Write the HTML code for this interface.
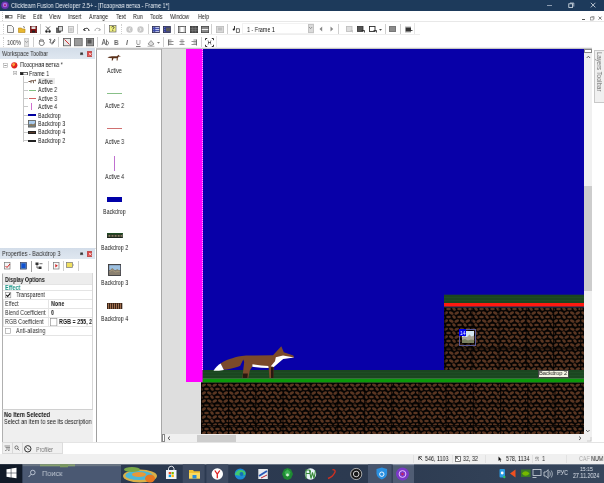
<!DOCTYPE html>
<html><head><meta charset="utf-8">
<style>
*{margin:0;padding:0;box-sizing:border-box}
html,body{width:604px;height:483px;overflow:hidden;background:#fff;font-family:"Liberation Sans",sans-serif;font-size:7px;color:#000;position:relative}
.a{position:absolute}
.t{position:absolute;white-space:nowrap;line-height:1;transform-origin:0 50%;will-change:transform}
</style></head><body>
<div class="a" style="left:0px;top:0px;width:604px;height:10.6px;background:#1d3a5b;"></div>
<svg class="a" style="left:1px;top:1.2px" width="9" height="9" viewBox="0 0 9 9"><circle cx="4" cy="4.2" r="3.8" fill="#6a32b0"/><circle cx="4" cy="4" r="2.2" fill="#b070e0"/><circle cx="4" cy="4.3" r="1" fill="#a02070"/></svg>
<div class="t" style="left:10.7px;top:2.00px;font-size:7px;color:#e6ecf3;transform:scaleX(0.795);">Clickteam Fusion Developer 2.5+ - [Позорная ветка - Frame 1*]</div>
<div class="a" style="left:547px;top:4.6px;width:5px;height:0.7px;background:#8c9cb0;"></div>
<svg class="a" style="left:567.5px;top:2.3px" width="7" height="6" viewBox="0 0 7 6"><rect x=".8" y="1.8" width="3.8" height="3.6" fill="none" stroke="#dde4ec" stroke-width=".8"/><path d="M2 1h3.8v3.6" fill="none" stroke="#dde4ec" stroke-width=".7"/></svg>
<svg class="a" style="left:589.5px;top:2.3px" width="7" height="6" viewBox="0 0 7 6"><path d="M.8 .8l4.6 4.6M5.4 .8L.8 5.4" stroke="#dde4ec" stroke-width=".8"/></svg>
<div class="a" style="left:0px;top:10.6px;width:604px;height:10.6px;background:#fff;"></div>
<svg class="a" style="left:5px;top:14.8px" width="8" height="4" viewBox="0 0 8 4"><rect x="0.4" y="0.4" width="6.6" height="2.6" fill="#fff" stroke="#555" stroke-width=".8"/><rect x="0.4" y="0.4" width="3.5" height="2.6" fill="#555"/></svg>
<div class="a" style="left:2.4px;top:12px;width:1px;height:9px;background:transparent;border-left:1px dotted #cfcfcf"></div>
<div class="t" style="left:16.9px;top:12.60px;font-size:7px;color:#1a1a1a;transform:scaleX(0.77);">File</div>
<div class="t" style="left:32.8px;top:12.60px;font-size:7px;color:#1a1a1a;transform:scaleX(0.77);">Edit</div>
<div class="t" style="left:49.2px;top:12.60px;font-size:7px;color:#1a1a1a;transform:scaleX(0.77);">View</div>
<div class="t" style="left:67.9px;top:12.60px;font-size:7px;color:#1a1a1a;transform:scaleX(0.77);">Insert</div>
<div class="t" style="left:88.7px;top:12.60px;font-size:7px;color:#1a1a1a;transform:scaleX(0.77);">Arrange</div>
<div class="t" style="left:116.0px;top:12.60px;font-size:7px;color:#1a1a1a;transform:scaleX(0.77);">Text</div>
<div class="t" style="left:133.0px;top:12.60px;font-size:7px;color:#1a1a1a;transform:scaleX(0.77);">Run</div>
<div class="t" style="left:150.0px;top:12.60px;font-size:7px;color:#1a1a1a;transform:scaleX(0.77);">Tools</div>
<div class="t" style="left:170.0px;top:12.60px;font-size:7px;color:#1a1a1a;transform:scaleX(0.77);">Window</div>
<div class="t" style="left:198.0px;top:12.60px;font-size:7px;color:#1a1a1a;transform:scaleX(0.77);">Help</div>
<div class="a" style="left:582px;top:19px;width:3px;height:0.9px;background:#555;"></div>
<svg class="a" style="left:589.5px;top:16px" width="5" height="5" viewBox="0 0 5 5"><rect x=".4" y="1.2" width="2.8" height="2.8" fill="none" stroke="#777" stroke-width=".6"/><path d="M1.3 .5h2.8v2.8" fill="none" stroke="#777" stroke-width=".6"/></svg>
<svg class="a" style="left:597.5px;top:16.3px" width="5" height="5" viewBox="0 0 5 5"><path d="M.6 .6l3 3M3.6 .6l-3 3" stroke="#555" stroke-width=".8"/></svg>
<div class="a" style="left:0px;top:21.2px;width:604px;height:0.8px;background:#e8e8e8;"></div>
<div class="a" style="left:0px;top:22px;width:604px;height:13px;background:#fff;"></div>
<div class="a" style="left:2.5px;top:23.5px;width:1px;height:10.0px;background:transparent;border-left:1px dotted #cfcfcf"></div>
<svg class="a" style="left:7px;top:25px" width="7" height="8" viewBox="0 0 7 8"><path d="M.5 .5h4l2 2v5h-6z" fill="#f4f4f4" stroke="#777" stroke-width=".9"/></svg>
<svg class="a" style="left:18px;top:25.5px" width="8" height="7" viewBox="0 0 8 7"><path d="M.5 2h3l1 1h2.5v3.5h-6.5z" fill="#e8b830" stroke="#b08010" stroke-width=".6"/><path d="M5 .5l2 1" stroke="#555" stroke-width=".8"/></svg>
<svg class="a" style="left:30px;top:25.5px" width="7" height="7" viewBox="0 0 7 7"><rect x=".3" y=".3" width="6.4" height="6.4" fill="#8a1010" stroke="#4a0808" stroke-width=".6"/><rect x="1.5" y=".5" width="4" height="2.5" fill="#e0e0e0"/><rect x="2" y="4.5" width="3" height="2" fill="#222"/></svg>
<div class="a" style="left:40px;top:23.5px;width:0.8px;height:10.0px;background:#cfcfcf;"></div>
<svg class="a" style="left:45px;top:25.5px" width="6" height="7" viewBox="0 0 6 7"><path d="M1 .5l4 4M5 .5l-4 4" stroke="#444" stroke-width=".9"/><circle cx="1.5" cy="5.5" r="1.2" fill="#222"/><circle cx="4.5" cy="5.5" r="1.2" fill="#222"/></svg>
<svg class="a" style="left:56px;top:25.5px" width="7" height="7" viewBox="0 0 7 7"><rect x=".5" y="2" width="4" height="4.5" fill="#666" stroke="#333" stroke-width=".6"/><rect x="2.5" y=".5" width="4" height="4.5" fill="#ddd" stroke="#333" stroke-width=".7"/></svg>
<svg class="a" style="left:68px;top:25.5px" width="6" height="7" viewBox="0 0 6 7"><rect x=".5" y=".5" width="5" height="6" fill="#e6e6e6" stroke="#aaa" stroke-width=".7"/><rect x="1.5" y="2" width="3" height="3.5" fill="#ccc"/></svg>
<div class="a" style="left:77.4px;top:23.5px;width:0.8px;height:10.0px;background:#cfcfcf;"></div>
<svg class="a" style="left:82.5px;top:26.5px" width="7" height="5" viewBox="0 0 7 5"><path d="M1.5 1.5l-1 1.5 2 .5" fill="none" stroke="#222" stroke-width="1"/><path d="M1 2.5c2-2 5-1.5 5 1.5" fill="none" stroke="#222" stroke-width="1"/></svg>
<svg class="a" style="left:94px;top:26.5px" width="7" height="5" viewBox="0 0 7 5"><path d="M5.5 1.5l1 1.5-2 .5" fill="none" stroke="#aaa" stroke-width="1"/><path d="M6 2.5c-2-2-5-1.5-5 1.5" fill="none" stroke="#aaa" stroke-width="1"/></svg>
<div class="a" style="left:104px;top:23.5px;width:0.8px;height:10.0px;background:#cfcfcf;"></div>
<svg class="a" style="left:108.5px;top:25px" width="8" height="8" viewBox="0 0 8 8"><rect x=".5" y=".5" width="6.5" height="6.5" fill="#f0f080" stroke="#666" stroke-width=".7"/><path d="M2.5 2.2c.5-1 2.5-1 2.5.3 0 .8-1.2 1-1.2 1.8" fill="none" stroke="#222" stroke-width=".8"/><circle cx="3.8" cy="5.3" r=".5" fill="#222"/></svg>
<div class="a" style="left:121px;top:23.5px;width:1px;height:10.0px;background:transparent;border-left:1px dotted #cfcfcf"></div>
<svg class="a" style="left:126px;top:25.5px" width="7" height="7" viewBox="0 0 7 7"><circle cx="3.5" cy="3.5" r="3.2" fill="#c8c8c8"/><path d="M4.5 2l-1.7 1.5 1.7 1.5" fill="none" stroke="#fff" stroke-width=".9"/></svg>
<svg class="a" style="left:137px;top:25.5px" width="7" height="7" viewBox="0 0 7 7"><circle cx="3.5" cy="3.5" r="3.2" fill="#c8c8c8"/><path d="M2.5 2l1.7 1.5-1.7 1.5" fill="none" stroke="#fff" stroke-width=".9"/></svg>
<div class="a" style="left:147.5px;top:23.5px;width:0.8px;height:10.0px;background:#cfcfcf;"></div>
<svg class="a" style="left:152px;top:25.5px" width="8" height="7" viewBox="0 0 8 7"><rect x=".3" y=".3" width="7.2" height="6.4" fill="#3a48a8" stroke="#223" stroke-width=".6"/><path d="M3.3 1.6h3.9M3.3 3.5h3.9M3.3 5.4h3.9" stroke="#e8ecff" stroke-width=".8"/><path d="M1.6 1.6h.5M1.6 3.5h.5M1.6 5.4h.5" stroke="#fff" stroke-width=".8"/></svg>
<svg class="a" style="left:162.8px;top:25.5px" width="8" height="7" viewBox="0 0 8 7"><rect x=".3" y=".3" width="7.2" height="6.4" fill="#303a98" stroke="#223" stroke-width=".6"/><rect x="3" y="1.5" width="4" height="4" fill="#5a5a5a"/><path d="M1.6 1.6h.5M1.6 3.5h.5M1.6 5.4h.5" stroke="#dde" stroke-width=".8"/></svg>
<div class="a" style="left:174px;top:23.5px;width:0.8px;height:10.0px;background:#cfcfcf;"></div>
<svg class="a" style="left:178.2px;top:25.5px" width="8" height="7" viewBox="0 0 8 7"><rect x=".4" y=".4" width="7.2" height="6.2" fill="#fff" stroke="#444" stroke-width=".8"/><rect x=".8" y=".8" width="1.6" height="5.4" fill="#aaa"/><rect x="5.6" y=".8" width="1.6" height="5.4" fill="#ccc"/></svg>
<svg class="a" style="left:189.6px;top:25.5px" width="8" height="7" viewBox="0 0 8 7"><rect x=".4" y=".4" width="7.2" height="6.2" fill="#505050" stroke="#333" stroke-width=".8"/><path d="M2.7 .5v6M5.3 .5v6M.5 2.6h7M.5 4.4h7" stroke="#888" stroke-width=".5"/></svg>
<svg class="a" style="left:201.2px;top:25.5px" width="8" height="7" viewBox="0 0 8 7"><rect x=".4" y=".4" width="7.2" height="6.2" fill="#8a8a8a" stroke="#444" stroke-width=".8"/><path d="M.8 3.5h6.4" stroke="#f0f0f0" stroke-width="1"/></svg>
<div class="a" style="left:211.3px;top:23.5px;width:0.8px;height:10.0px;background:#cfcfcf;"></div>
<svg class="a" style="left:216px;top:25.5px" width="8" height="7" viewBox="0 0 8 7"><rect x=".4" y=".4" width="7.2" height="6.2" fill="#d8d8d8" stroke="#bbb" stroke-width=".8"/><rect x="2" y="1.5" width="4" height="3" fill="#c0c0c0"/></svg>
<div class="a" style="left:227px;top:23.5px;width:0.8px;height:10.0px;background:#cfcfcf;"></div>
<svg class="a" style="left:231.5px;top:25px" width="8" height="8" viewBox="0 0 8 8"><path d="M2.5 1v3.5" stroke="#222" stroke-width=".9"/><circle cx="1.7" cy="4.5" r="1" fill="#222"/><rect x="4.3" y="3.8" width="3" height="3.5" fill="#fff" stroke="#333" stroke-width=".7"/></svg>
<div class="a" style="left:241.5px;top:23.5px;width:0.8px;height:10.0px;background:#cfcfcf;"></div>
<div class="a" style="left:241.8px;top:23px;width:72px;height:11px;background:#fff;border:0.6px solid #f2f2f2"></div>
<div class="t" style="left:247px;top:25.50px;font-size:7px;color:#111;transform:scaleX(0.77);">1 - Frame 1</div>
<div class="a" style="left:307.5px;top:24.3px;width:6.2px;height:9px;background:#dadada;border:0.6px solid #c4c4c4"></div>
<svg class="a" style="left:308px;top:26px" width="5" height="4" viewBox="0 0 5 4"><path d="M1 1l1.6 1.6L4.2 1" fill="none" stroke="#777" stroke-width=".7"/></svg>
<svg class="a" style="left:318.8px;top:26px" width="4" height="6" viewBox="0 0 4 6"><path d="M3.2 .5v5L.5 3z" fill="#888"/></svg>
<svg class="a" style="left:329.8px;top:26px" width="4" height="6" viewBox="0 0 4 6"><path d="M.5 .5v5L3.2 3z" fill="#888"/></svg>
<div class="a" style="left:338.3px;top:23.5px;width:0.8px;height:10.0px;background:#cfcfcf;"></div>
<svg class="a" style="left:345.5px;top:25.8px" width="7" height="7" viewBox="0 0 7 7"><rect x=".4" y=".4" width="5.6" height="5" fill="#ddd" stroke="#bbb" stroke-width=".8"/><path d="M4.5 4.5h2v2" fill="none" stroke="#bbb" stroke-width=".7"/></svg>
<svg class="a" style="left:356.8px;top:25.8px" width="8" height="7" viewBox="0 0 8 7"><rect x=".4" y=".4" width="5.6" height="5" fill="#555" stroke="#333" stroke-width=".8"/><path d="M4.5 4.5h3v2" fill="none" stroke="#222" stroke-width=".8"/></svg>
<svg class="a" style="left:368.8px;top:25.8px" width="8" height="7" viewBox="0 0 8 7"><rect x=".4" y=".4" width="5.6" height="5" fill="#fff" stroke="#222" stroke-width=".9"/><path d="M4.5 4.5h3v2" fill="none" stroke="#222" stroke-width=".8"/></svg>
<svg class="a" style="left:378.8px;top:28.5px" width="3" height="2" viewBox="0 0 3 2"><path d="M0 0h3L1.5 1.8z" fill="#444"/></svg>
<div class="a" style="left:384.7px;top:23.5px;width:0.8px;height:10.0px;background:#cfcfcf;"></div>
<div class="a" style="left:389.3px;top:26.3px;width:6.8px;height:5.5px;background:#8c8c8c;border:0.6px solid #777"></div>
<div class="a" style="left:400px;top:23.5px;width:0.8px;height:10.0px;background:#cfcfcf;"></div>
<svg class="a" style="left:404.5px;top:25.5px" width="8" height="7" viewBox="0 0 8 7"><rect x=".5" y="1.5" width="5.5" height="4" fill="#333"/><path d="M1 .5v1M3 .5v1M5 .5v1M1 5.5v1M3 5.5v1M5 5.5v1" stroke="#333" stroke-width=".8"/><path d="M6 4.5h1.5" stroke="#333" stroke-width=".9"/></svg>
<div class="a" style="left:414.3px;top:22.5px;width:0.8px;height:12px;background:#e6e6e6;"></div>
<div class="a" style="left:0px;top:34.4px;width:420px;height:0.7px;background:#eeeeee;"></div>
<div class="a" style="left:2.9px;top:36.5px;width:1px;height:10.0px;background:transparent;border-left:1px dotted #cfcfcf"></div>
<div class="t" style="left:7.3px;top:38.70px;font-size:7px;color:#333;transform:scaleX(0.77);">100%</div>
<div class="a" style="left:23.6px;top:37.6px;width:5.8px;height:9.3px;background:#e2e2e2;border:0.7px solid #ccc"></div>
<svg class="a" style="left:24px;top:40px" width="5" height="4" viewBox="0 0 5 4"><path d="M1 1l1.6 1.6L4.2 1" fill="none" stroke="#888" stroke-width=".7"/></svg>
<div class="a" style="left:32.5px;top:37px;width:0.8px;height:9.5px;background:#cfcfcf;"></div>
<svg class="a" style="left:37.7px;top:38px" width="7" height="8" viewBox="0 0 7 8"><path d="M1.5 4.5v-2.5M2.8 4v-3.2M4.1 4v-3M5.4 4.2v-2.4M1.2 4.5c0 2 1 3 2.5 3s2.5-1 2.5-2.5v-1" fill="none" stroke="#444" stroke-width=".7"/></svg>
<svg class="a" style="left:48.3px;top:38px" width="8" height="8" viewBox="0 0 8 8"><path d="M1 2c1-1.5 2.5-1 1.5 1-1 2 .5 3 2 1.5l2.5-3.5M4 6.5l3-4" fill="none" stroke="#333" stroke-width=".8"/></svg>
<div class="a" style="left:58.3px;top:37px;width:0.8px;height:9.5px;background:#cfcfcf;"></div>
<svg class="a" style="left:62.9px;top:38px" width="8" height="8.5" viewBox="0 0 8 8.5"><rect x=".4" y=".4" width="7.2" height="7.4" fill="#e8e8e8" stroke="#555" stroke-width=".8"/><path d="M1.5 1.5l5 5" stroke="#d02020" stroke-width=".9"/></svg>
<svg class="a" style="left:74px;top:38px" width="8.6" height="8.5" viewBox="0 0 8.6 8.5"><rect x=".4" y=".4" width="7.8" height="7.4" fill="#9a9a9a" stroke="#666" stroke-width=".8"/></svg>
<svg class="a" style="left:85.9px;top:38px" width="8" height="8.5" viewBox="0 0 8 8.5"><rect x=".4" y=".4" width="7.2" height="7.4" fill="#999" stroke="#555" stroke-width=".8"/><rect x="1.5" y="1.5" width="4" height="4" fill="#555"/></svg>
<div class="a" style="left:96.5px;top:37px;width:0.8px;height:9.5px;background:#cfcfcf;"></div>
<svg class="a" style="left:100.5px;top:38px" width="8" height="8.5" viewBox="0 0 8 8.5"><path d="M1 7l1.8-6 1.8 6M1.6 5h2.5" fill="none" stroke="#555" stroke-width=".8"/><path d="M5.5 1.5v5.5c1.5 0 2-1 2-2s-.5-1.8-2-1.8" fill="none" stroke="#555" stroke-width=".8"/></svg>
<div class="t" style="left:113.7px;top:38.70px;font-size:7px;color:#666;font-weight:bold;transform:scaleX(0.9);">B</div>
<div class="t" style="left:125.5px;top:38.70px;font-size:7px;color:#666;font-weight:bold;transform:scaleX(0.9);font-style:italic;">I</div>
<div class="t" style="left:136px;top:38.70px;font-size:7px;color:#777;transform:scaleX(0.9);text-decoration:underline;">U</div>
<svg class="a" style="left:147px;top:38.5px" width="8" height="8" viewBox="0 0 8 8"><path d="M1 5l3-3.5 3 3.5-3 2z" fill="#ddd" stroke="#777" stroke-width=".7"/><path d="M.5 7.3h7" stroke="#aaa" stroke-width=".8"/></svg>
<svg class="a" style="left:156.5px;top:41.5px" width="3" height="2" viewBox="0 0 3 2"><path d="M0 0h3L1.5 1.8z" fill="#777"/></svg>
<div class="a" style="left:163.2px;top:37px;width:0.8px;height:9.5px;background:#cfcfcf;"></div>
<svg class="a" style="left:167.8px;top:38.5px" width="6" height="7" viewBox="0 0 6 7"><path d="M.5 1h3M.5 2.5h5M.5 4h3M.5 5.5h5" stroke="#777" stroke-width=".8"/><path d="M.5 .5v6" stroke="#555" stroke-width=".8"/></svg>
<svg class="a" style="left:179px;top:38.5px" width="6" height="7" viewBox="0 0 6 7"><path d="M1.5 1h3M.5 2.5h5M1.5 4h3M.5 5.5h5" stroke="#777" stroke-width=".8"/></svg>
<svg class="a" style="left:191px;top:38.5px" width="6" height="7" viewBox="0 0 6 7"><path d="M2.5 1h3M.5 2.5h5M2.5 4h3M.5 5.5h5" stroke="#777" stroke-width=".8"/><path d="M5.5 .5v6" stroke="#555" stroke-width=".8"/></svg>
<div class="a" style="left:201px;top:37px;width:0.8px;height:9.5px;background:#cfcfcf;"></div>
<svg class="a" style="left:205px;top:38px" width="9" height="9" viewBox="0 0 9 9"><path d="M.5 2.2v-1.7h1.7M6.8 .5h1.7v1.7M8.5 6.8v1.7H6.8M2.2 8.5H.5V6.8" fill="none" stroke="#333" stroke-width="1"/><path d="M3 2.5c.8 1.5.8 2.5 0 4M6 2.5c-.8 1.5-.8 2.5 0 4M3 4.5h3" fill="none" stroke="#444" stroke-width=".8"/></svg>
<div class="a" style="left:216px;top:35.5px;width:0.8px;height:12px;background:#e6e6e6;"></div>
<div class="a" style="left:0px;top:47.2px;width:604px;height:0.8px;background:#f0f0f0;"></div>
<div class="a" style="left:0px;top:48px;width:96.5px;height:394px;background:#fff;"></div>
<div class="a" style="left:0px;top:48.3px;width:94.7px;height:10.7px;background:linear-gradient(#d3dde9,#dfe7f0);"></div>
<div class="t" style="left:1.7px;top:50.20px;font-size:7px;color:#333;transform:scaleX(0.77);">Workspace Toolbar</div>
<svg class="a" style="left:79.5px;top:52px" width="4" height="4" viewBox="0 0 4 4"><rect x=".3" y=".5" width="2.6" height="2" fill="#333"/><path d="M0 2.6h3.2" stroke="#333" stroke-width=".6"/></svg>
<div class="a" style="left:87px;top:51.3px;width:5.2px;height:5.7px;background:#e04848;border:0.5px solid #c05050"></div>
<svg class="a" style="left:87.5px;top:52px" width="4.5" height="4.5" viewBox="0 0 4.5 4.5"><path d="M1 1l2.4 2.4M3.4 1L1 3.4" stroke="#fff" stroke-width=".7"/></svg>
<svg class="a" style="left:3px;top:62.5px" width="5" height="5" viewBox="0 0 5 5"><rect x=".5" y=".5" width="4" height="4" fill="#fff" stroke="#aaa" stroke-width=".6"/><path d="M1.3 2.5h2.4" stroke="#555" stroke-width=".6"/></svg>
<svg class="a" style="left:10.8px;top:61.5px" width="7" height="7" viewBox="0 0 7 7"><circle cx="3.3" cy="3.3" r="3.1" fill="#e02020"/><circle cx="2.5" cy="2.5" r="1.4" fill="#ff9050"/><path d="M2 4.5l2-3" stroke="#ffd000" stroke-width=".7"/></svg>
<div class="t" style="left:20.2px;top:61.30px;font-size:7px;color:#222;transform:scaleX(0.77);">Позорная ветка *</div>
<svg class="a" style="left:13.2px;top:70.8px" width="4" height="4.5" viewBox="0 0 4 4.5"><rect x=".5" y=".5" width="3.2" height="3.5" fill="#fff" stroke="#aaa" stroke-width=".6"/><path d="M1.1 2.25h2" stroke="#666" stroke-width=".6"/></svg>
<svg class="a" style="left:19.5px;top:71.5px" width="8" height="3.5" viewBox="0 0 8 3.5"><rect x=".4" y=".4" width="7" height="2.6" fill="#fff" stroke="#222" stroke-width=".7"/><rect x=".4" y=".4" width="3" height="2.6" fill="#222"/></svg>
<div class="t" style="left:29px;top:69.50px;font-size:7px;color:#222;transform:scaleX(0.77);">Frame 1</div>
<div class="a" style="left:23.3px;top:76px;width:0.7px;height:65.5px;background:#c8c8c8;"></div>
<div class="a" style="left:37.8px;top:78px;width:17px;height:6.4px;background:#ececec;"></div>
<div class="a" style="left:23.5px;top:81.7px;width:4.5px;height:0.6px;background:#c8c8c8;"></div>
<div class="t" style="left:38.3px;top:78.10px;font-size:7px;color:#222;transform:scaleX(0.77);">Active</div>
<div class="a" style="left:23.5px;top:89.9px;width:4.5px;height:0.6px;background:#c8c8c8;"></div>
<div class="t" style="left:38.3px;top:86.30px;font-size:7px;color:#222;transform:scaleX(0.77);">Active 2</div>
<div class="a" style="left:23.5px;top:98.3px;width:4.5px;height:0.6px;background:#c8c8c8;"></div>
<div class="t" style="left:38.3px;top:94.70px;font-size:7px;color:#222;transform:scaleX(0.77);">Active 3</div>
<div class="a" style="left:23.5px;top:106.3px;width:4.5px;height:0.6px;background:#c8c8c8;"></div>
<div class="t" style="left:38.3px;top:102.70px;font-size:7px;color:#222;transform:scaleX(0.77);">Active 4</div>
<div class="a" style="left:23.5px;top:115.4px;width:4.5px;height:0.6px;background:#c8c8c8;"></div>
<div class="t" style="left:38.3px;top:111.80px;font-size:7px;color:#222;transform:scaleX(0.77);">Backdrop</div>
<div class="a" style="left:23.5px;top:123.9px;width:4.5px;height:0.6px;background:#c8c8c8;"></div>
<div class="t" style="left:38.3px;top:120.30px;font-size:7px;color:#222;transform:scaleX(0.77);">Backdrop 3</div>
<div class="a" style="left:23.5px;top:131.8px;width:4.5px;height:0.6px;background:#c8c8c8;"></div>
<div class="t" style="left:38.3px;top:128.20px;font-size:7px;color:#222;transform:scaleX(0.77);">Backdrop 4</div>
<div class="a" style="left:23.5px;top:140.3px;width:4.5px;height:0.6px;background:#c8c8c8;"></div>
<div class="t" style="left:38.3px;top:136.70px;font-size:7px;color:#222;transform:scaleX(0.77);">Backdrop 2</div>
<svg class="a" style="left:28px;top:79px" width="8" height="5" viewBox="0 0 8 5"><path d="M.5 2.5h1.5l1-.7h3l1-1 .6.5-.5.6h.6" fill="none" stroke="#5a3520" stroke-width=".9"/><path d="M3 2.2v2M5.5 2.2v2" stroke="#3a2010" stroke-width=".7"/></svg>
<div class="a" style="left:28.8px;top:89.6px;width:7px;height:0.7px;background:#80c080;"></div>
<div class="a" style="left:28.8px;top:98px;width:7px;height:0.7px;background:#d06060;"></div>
<div class="a" style="left:31px;top:103px;width:0.8px;height:7px;background:#d070d0;"></div>
<div class="a" style="left:28px;top:114px;width:7.7px;height:2.2px;background:#0000a0;"></div>
<svg class="a" style="left:28px;top:120px" width="8" height="7.5" viewBox="0 0 8 7.5"><rect x=".4" y=".4" width="7.2" height="6.7" fill="#7a8a90" stroke="#444" stroke-width=".6"/><rect x="1" y="1" width="6" height="3" fill="#aaccee"/><path d="M1 6l2-2.5 2 1.5 2-2v3z" fill="#8a7a60"/></svg>
<div class="a" style="left:28px;top:130.5px;width:7.5px;height:3px;background:#5a3a28;border:0.5px solid #222"></div>
<div class="a" style="left:28px;top:139.5px;width:7.5px;height:1.8px;background:#3a4a30;border-top:0.5px solid #222;border-bottom:0.5px solid #222"></div>
<div class="a" style="left:0px;top:247.5px;width:96px;height:0.8px;background:#e0e0e0;"></div>
<div class="a" style="left:0px;top:248.3px;width:94.7px;height:10.7px;background:linear-gradient(#d3dde9,#dfe7f0);"></div>
<div class="t" style="left:1.7px;top:250.00px;font-size:7px;color:#333;transform:scaleX(0.795);">Properties - Backdrop 3</div>
<svg class="a" style="left:79.5px;top:251.8px" width="4" height="4" viewBox="0 0 4 4"><rect x=".3" y=".5" width="2.6" height="2" fill="#333"/><path d="M0 2.6h3.2" stroke="#333" stroke-width=".6"/></svg>
<div class="a" style="left:87px;top:251.1px;width:5.2px;height:5.7px;background:#e04848;border:0.5px solid #c05050"></div>
<svg class="a" style="left:87.5px;top:251.8px" width="4.5" height="4.5" viewBox="0 0 4.5 4.5"><path d="M1 1l2.4 2.4M3.4 1L1 3.4" stroke="#fff" stroke-width=".7"/></svg>
<div class="a" style="left:0px;top:259px;width:96px;height:13.3px;background:#fff;"></div>
<svg class="a" style="left:4px;top:261.5px" width="7" height="8" viewBox="0 0 7 8"><rect x=".5" y=".5" width="5.5" height="6.5" fill="#f4f4f4" stroke="#777" stroke-width=".7"/><path d="M1.5 4l1.5 1.5 3-3.5" fill="none" stroke="#d02020" stroke-width="1"/></svg>
<svg class="a" style="left:19.5px;top:261.5px" width="7" height="8" viewBox="0 0 7 8"><rect x=".4" y=".4" width="6.2" height="6.7" fill="#5a8ac0" stroke="#335" stroke-width=".6"/><rect x="1.5" y="1.5" width="4" height="4.5" fill="#1050d0"/></svg>
<div class="a" style="left:31px;top:260.5px;width:0.9px;height:11px;background:#a0a0a0;"></div>
<svg class="a" style="left:34.5px;top:261.5px" width="8" height="8" viewBox="0 0 8 8"><rect x=".5" y=".5" width="3" height="2.5" fill="#333"/><rect x="3.5" y="4.5" width="3" height="2.5" fill="#333"/><path d="M2 3v3h1.5" fill="none" stroke="#333" stroke-width=".7"/><path d="M4.5 1.7h3" stroke="#333" stroke-width=".7"/></svg>
<div class="a" style="left:47.5px;top:260.5px;width:0.8px;height:10.5px;background:#cfcfcf;"></div>
<svg class="a" style="left:52.5px;top:261.5px" width="7" height="8" viewBox="0 0 7 8"><rect x=".5" y=".5" width="5.5" height="6.5" fill="#f8f8f8" stroke="#777" stroke-width=".7"/><path d="M2.3 2v3.5l2.5-1.75z" fill="#d02020"/></svg>
<div class="a" style="left:63px;top:260.5px;width:0.8px;height:10.5px;background:#cfcfcf;"></div>
<svg class="a" style="left:66px;top:262px" width="9" height="7" viewBox="0 0 9 7"><rect x=".5" y=".5" width="6" height="5" fill="#f0e060" stroke="#777" stroke-width=".7"/><path d="M7.5 2v2" stroke="#aaa" stroke-width=".6"/></svg>
<div class="a" style="left:78px;top:260.5px;width:0.8px;height:10.5px;background:#cfcfcf;"></div>
<div class="a" style="left:2px;top:272.5px;width:91px;height:169px;background:#fff;border-left:0.8px solid #b0b0b0;border-right:0.8px solid #d8d8d8"></div>
<div class="a" style="left:2px;top:272.5px;width:91px;height:0.8px;background:#d8d8d8;"></div>
<div class="a" style="left:2.8px;top:273.3px;width:89.5px;height:10.3px;background:#ededed;"></div>
<div class="t" style="left:5.3px;top:275.50px;font-size:7px;color:#222;font-weight:bold;transform:scaleX(0.745);">Display Options</div>
<div class="t" style="left:5.3px;top:283.80px;font-size:7px;color:#24988a;font-weight:bold;transform:scaleX(0.8);">Effect</div>
<div class="a" style="left:2.8px;top:283.6px;width:89.5px;height:0.7px;background:#e4e4e4;"></div>
<div class="a" style="left:2.8px;top:290.2px;width:89.5px;height:0.7px;background:#e4e4e4;"></div>
<div class="a" style="left:2.8px;top:298.5px;width:89.5px;height:0.7px;background:#e4e4e4;"></div>
<div class="a" style="left:2.8px;top:307.7px;width:89.5px;height:0.7px;background:#e4e4e4;"></div>
<div class="a" style="left:2.8px;top:316.7px;width:89.5px;height:0.7px;background:#e4e4e4;"></div>
<div class="a" style="left:2.8px;top:325.5px;width:89.5px;height:0.7px;background:#e4e4e4;"></div>
<div class="a" style="left:2.8px;top:334.6px;width:89.5px;height:0.7px;background:#e4e4e4;"></div>
<div class="a" style="left:48.3px;top:298.5px;width:0.7px;height:27px;background:#e4e4e4;"></div>
<div class="a" style="left:2.8px;top:298.5px;width:0.7px;height:27px;background:#e4e4e4;"></div>
<svg class="a" style="left:5px;top:292px" width="6.5" height="6.5" viewBox="0 0 6.5 6.5"><rect x=".4" y=".4" width="5.4" height="5.4" fill="#fff" stroke="#888" stroke-width=".6"/><path d="M1.3 3l1.4 1.5 2.5-3.2" fill="none" stroke="#111" stroke-width="1.1"/></svg>
<div class="t" style="left:15.7px;top:291.20px;font-size:7px;color:#222;transform:scaleX(0.77);">Transparent</div>
<div class="t" style="left:5px;top:300.00px;font-size:7px;color:#333;transform:scaleX(0.77);">Effect</div>
<div class="t" style="left:50.5px;top:300.00px;font-size:7px;color:#222;font-weight:bold;transform:scaleX(0.77);">None</div>
<div class="t" style="left:5px;top:309.10px;font-size:7px;color:#333;transform:scaleX(0.77);">Blend Coefficient</div>
<div class="t" style="left:50.5px;top:309.10px;font-size:7px;color:#222;font-weight:bold;transform:scaleX(0.77);">0</div>
<div class="t" style="left:5px;top:318.10px;font-size:7px;color:#333;transform:scaleX(0.77);">RGB Coefficient</div>
<svg class="a" style="left:50px;top:317.5px" width="8" height="8.5" viewBox="0 0 8 8.5"><rect x=".4" y=".4" width="6.5" height="7.5" fill="#fff" stroke="#888" stroke-width=".6"/></svg>
<div class="t" style="left:58.8px;top:318.10px;font-size:7px;color:#222;font-weight:bold;transform:scaleX(0.77);">RGB = 255, 2</div>
<svg class="a" style="left:5px;top:327.5px" width="7" height="6" viewBox="0 0 7 6"><rect x=".4" y=".4" width="5.2" height="5" fill="#fff" stroke="#999" stroke-width=".6"/></svg>
<div class="t" style="left:15.7px;top:326.80px;font-size:7px;color:#333;transform:scaleX(0.77);">Anti-aliasing</div>
<div class="a" style="left:2px;top:409px;width:91px;height:33px;background:#efefef;border-top:0.8px solid #d0d0d0;border-left:0.8px solid #b0b0b0"></div>
<div class="t" style="left:3.5px;top:411.30px;font-size:7px;color:#111;font-weight:bold;transform:scaleX(0.815);">No Item Selected</div>
<div class="t" style="left:3.5px;top:417.90px;font-size:7px;color:#222;transform:scaleX(0.795);">Select an item to see its description</div>
<div class="a" style="left:0px;top:442px;width:96px;height:12px;background:#fff;"></div>
<div class="a" style="left:2px;top:442px;width:61px;height:11.8px;background:#f0f0f0;border:0.7px solid #dcdcdc"></div>
<div class="a" style="left:11.8px;top:442px;width:0.7px;height:11.8px;background:#d8d8d8;"></div>
<div class="a" style="left:22px;top:442px;width:0.7px;height:11.8px;background:#d8d8d8;"></div>
<svg class="a" style="left:4px;top:445px" width="7" height="6" viewBox="0 0 7 6"><path d="M.5 1h5.5M1.5 2.5h4.5M2 4h4M1 5.5h1.5M4 5.5h1.5" stroke="#666" stroke-width=".7"/></svg>
<svg class="a" style="left:14px;top:445px" width="6" height="6" viewBox="0 0 6 6"><circle cx="2.5" cy="2.5" r="1.6" fill="none" stroke="#555" stroke-width=".8"/><path d="M3.7 3.7l1.6 1.6" stroke="#555" stroke-width=".9"/></svg>
<svg class="a" style="left:24px;top:444.6px" width="8" height="8" viewBox="0 0 8 8"><circle cx="3.8" cy="3.8" r="3.2" fill="none" stroke="#333" stroke-width="1"/><path d="M2.3 2.3l1.5 1.5 1.7 1" fill="none" stroke="#333" stroke-width=".8"/></svg>
<div class="t" style="left:36.4px;top:445.70px;font-size:7px;color:#777;transform:scaleX(0.77);">Profiler</div>
<div class="a" style="left:96px;top:48.6px;width:65.5px;height:393.4px;background:#fff;border-left:0.9px solid #a0a0a0;border-top:0.8px solid #c8c8c8"></div>
<div class="a" style="left:161px;top:48.6px;width:0.8px;height:393px;background:#a8a8a8;"></div>
<svg class="a" style="left:107px;top:54px" width="15" height="7" viewBox="0 0 15 7"><path d="M.5 3.5c2-1 4-1.2 6-1.2h3.5l1.5-1.6.5.8 1.5.9.3.4h-2l-1 1.2-.2 2.5h-1l.2-2.2H6.5l-.8 2.3h-1l.3-2.3C3.5 4 2 3.8.5 3.5z" fill="#5a3018"/><path d="M11.5 3h1.5" stroke="#fff" stroke-width=".5"/></svg>
<div class="t" style="left:106.7px;top:67.20px;font-size:7px;color:#222;transform:scaleX(0.77);">Active</div>
<div class="a" style="left:107px;top:92.5px;width:15px;height:0.8px;background:#88c088;"></div>
<div class="t" style="left:104.8px;top:102.30px;font-size:7px;color:#222;transform:scaleX(0.77);">Active 2</div>
<div class="a" style="left:106.8px;top:128.2px;width:15.7px;height:0.8px;background:#d07070;"></div>
<div class="t" style="left:105px;top:137.90px;font-size:7px;color:#222;transform:scaleX(0.77);">Active 3</div>
<div class="a" style="left:114.3px;top:156.4px;width:0.9px;height:15px;background:#c070d0;"></div>
<div class="t" style="left:105px;top:173.10px;font-size:7px;color:#222;transform:scaleX(0.77);">Active 4</div>
<div class="a" style="left:106.8px;top:196.8px;width:15.5px;height:5.2px;background:#0000a8;"></div>
<div class="t" style="left:102.8px;top:208.30px;font-size:7px;color:#222;transform:scaleX(0.77);">Backdrop</div>
<svg class="a" style="left:106.9px;top:232.5px" width="16" height="5.5" viewBox="0 0 16 5.5"><rect x="0" y="0" width="15.8" height="5.3" fill="#2a3a28"/><rect x="0" y="0" width="15.8" height="1.2" fill="#1e4a22"/><rect x="0" y="4.5" width="15.8" height=".8" fill="#101010"/><path d="M1.5 2.9h1.8M4.6 2.9h1.8M7.7 2.9h1.8M10.8 2.9h1.8M13.6 2.9h1.5" stroke="#8a7a60" stroke-width="1.6"/></svg>
<div class="t" style="left:100.6px;top:244.20px;font-size:7px;color:#222;transform:scaleX(0.77);">Backdrop 2</div>
<svg class="a" style="left:107.8px;top:264px" width="13.5" height="12" viewBox="0 0 13.5 12"><rect x=".4" y=".4" width="12.6" height="11.2" fill="#556" stroke="#333" stroke-width=".8"/><rect x="1.2" y="1.2" width="11" height="5" fill="#9cc0e0"/><path d="M1.2 11V7l3-3 3 2.5 2-1.5 3 2V11z" fill="#8a8070"/><path d="M1.2 8l3-2 3 2 5-1" stroke="#b0a080" stroke-width=".7" fill="none"/></svg>
<div class="t" style="left:100.6px;top:279.00px;font-size:7px;color:#222;transform:scaleX(0.77);">Backdrop 3</div>
<svg class="a" style="left:107px;top:302.5px" width="15.5" height="6.5" viewBox="0 0 15.5 6.5"><rect x="0" y="0" width="15.3" height="6.3" fill="#3a2416"/><path d="M1.5 .5v5.3M3.5 .5v5.3M5.5 .5v5.3M7.5 .5v5.3M9.5 .5v5.3M11.5 .5v5.3M13.5 .5v5.3" stroke="#a07050" stroke-width="1"/></svg>
<div class="t" style="left:100.6px;top:314.80px;font-size:7px;color:#222;transform:scaleX(0.77);">Backdrop 4</div>
<div class="a" style="left:161.8px;top:48.6px;width:422.2px;height:385.5px;background:#dedede;"></div>
<div class="a" style="left:96px;top:48px;width:496px;height:0.9px;background:#c4c4c4;"></div>
<div class="a" style="left:186px;top:49.2px;width:16.6px;height:333.2px;background:#ff00ff;"></div>
<div class="a" style="left:202.6px;top:49.2px;width:381.4px;height:320.8px;background:#0800a8;"></div>
<div class="a" style="left:202.2px;top:48.9px;width:0.9px;height:321px;background:transparent;border-left:0.9px dotted rgba(255,220,255,.75)"></div>
<svg class="a" style="left:0;top:0" width="604" height="483">
<defs>
<pattern id="dirt" x="201" y="383" width="11" height="8" patternUnits="userSpaceOnUse">
<rect width="11" height="8" fill="#060403"/>
<ellipse cx="2.7" cy="2" rx="2.4" ry="1.4" fill="#5a3622" transform="rotate(-28 2.7 2)"/>
<ellipse cx="8.3" cy="2" rx="2.4" ry="1.4" fill="#5a3622" transform="rotate(28 8.3 2)"/>
<ellipse cx="5.5" cy="6" rx="2.3" ry="1.35" fill="#5a3622"/>
<ellipse cx="0" cy="6" rx="2.1" ry="1.35" fill="#5a3622" transform="rotate(45 0 6)"/>
<ellipse cx="11" cy="6" rx="2.1" ry="1.35" fill="#5a3622" transform="rotate(45 11 6)"/>
</pattern>
<pattern id="seam1" x="200.8" y="381.8" width="27.2" height="21.6" patternUnits="userSpaceOnUse">
<rect x="0" y="0" width="27.2" height="1.2" fill="#000" opacity=".75"/><rect x="0" y="0" width="1.2" height="21.6" fill="#000" opacity=".75"/>
</pattern>
<pattern id="seam2" x="444.2" y="305.1" width="27.2" height="21.6" patternUnits="userSpaceOnUse">
<rect x="0" y="0" width="27.2" height="1.2" fill="#000" opacity=".75"/><rect x="0" y="0" width="1.2" height="21.6" fill="#000" opacity=".75"/>
</pattern>

<pattern id="grass" x="0" y="0" width="3" height="3" patternUnits="userSpaceOnUse">
<rect width="3" height="3" fill="#1e4c24"/>
<rect x="0" y="1.5" width="3" height="1" fill="#173f1c"/>
</pattern>
</defs>
<rect x="201" y="382.6" width="383" height="51.5" fill="url(#dirt)"/><rect x="201" y="382.6" width="383" height="51.5" fill="url(#seam1)"/>
<rect x="202.6" y="370" width="381.4" height="8.8" fill="url(#grass)"/>
<rect x="202.6" y="378.8" width="381.4" height="3.8" fill="#0a980a"/><rect x="201" y="382.6" width="383" height="0.9" fill="#050302"/>
<rect x="444" y="294.7" width="140" height="8.3" fill="url(#grass)"/>
<rect x="444" y="303" width="140" height="3.7" fill="#ff1a10"/>
<rect x="444" y="306.7" width="140" height="1" fill="#1f4d26"/>
<rect x="444" y="307.7" width="140" height="62.3" fill="url(#dirt)"/><rect x="444" y="307.7" width="140" height="62.3" fill="url(#seam2)"/>
</svg>
<div class="a" style="left:458.8px;top:328.7px;width:17.2px;height:16.9px;background:rgba(0,0,0,.35);border:0.8px solid #5a5a98"></div>
<svg class="a" style="left:461.5px;top:331.4px" width="12.1" height="12.1" viewBox="0 0 12.1 12.1"><rect width="12.1" height="12.1" fill="#9a9a90"/><rect x="0" y="0" width="12.1" height="6" fill="#d4e6f2"/><path d="M0 12V6.5l2.5-1.5 2 1.5 3-3 2 2 2.6-1V12z" fill="#a8a498"/><path d="M0 12V9l3-1 3 1.5 3-1 3 .5V12z" fill="#7a8060"/></svg>
<div class="a" style="left:458.8px;top:328.7px;width:7.7px;height:7.8px;background:#0000f0;"></div>
<div class="t" style="left:459.5px;top:329.51px;font-size:6px;color:#fff;transform:scaleX(0.85);">14</div>
<div class="a" style="left:537.8px;top:370.2px;width:31.4px;height:7.6px;background:#f4f4e4;border:0.7px solid #444"></div>
<div class="t" style="left:539.4px;top:371.32px;font-size:5.8px;color:#222;transform:scaleX(0.96);">Backdrop 2</div>
<svg class="a" style="left:0;top:0" width="604" height="483">
<path d="M220.4 363.4C225 360.5 229 358.8 232.4 358.2 236 357 240 356.3 246 355.6L273 355.2 281.3 346.2 283.8 352.3 293.3 355.6 294.2 357.4 283 358.6 279 362 273.6 367 273.3 378 269.4 378 268.6 367.6C263 367 258 366.4 253 365.6L249.8 370.5 248.3 378 242.4 378 243.4 368.5 244.2 362 243.3 359.6C242 362 241 364.5 240.2 365.7 236 367.5 232 368.7 223.7 369.8Z" fill="#7b4a2b"/>
<path d="M213.5 370.8C215.5 367.5 218 365 220.6 363.4L223.9 369.9C220 370.6 216.5 370.9 213.5 370.8Z" fill="#fff"/>
<path d="M252.5 364.2C258 365.3 263 365.8 268.3 365.9L268.6 368C263 367.8 257.5 367.4 252.3 366.7Z" fill="#fff"/>
<path d="M275.8 357.2 283 355.4 294.2 357.4 283.2 359 279.3 362.2 273.8 367 270.8 366.3 275 361.2Z" fill="#fff"/>
<path d="M243 373.5h4.8l-.4 4.5h-4.6zM271 367.2h2.5v10.8h-2.5z" fill="#2a1810"/>
</svg>
<div class="a" style="left:161.8px;top:434.1px;width:422.2px;height:7.9px;background:#f0f0f0;"></div>
<div class="a" style="left:161.6px;top:434.2px;width:3px;height:7.8px;background:#fff;border:0.6px solid #888"></div>
<svg class="a" style="left:166.5px;top:436px" width="4" height="4.5" viewBox="0 0 4 4.5"><path d="M3 .5L1 2.2 3 4" fill="none" stroke="#333" stroke-width=".8"/></svg>
<div class="a" style="left:197.2px;top:434.6px;width:38.6px;height:7px;background:#cdcdcd;"></div>
<div class="a" style="left:161.8px;top:442px;width:430px;height:12px;background:#fff;"></div>
<div class="a" style="left:63px;top:442.2px;width:541px;height:0.8px;background:#e4e4e4;"></div>
<div class="a" style="left:584px;top:48.9px;width:8.2px;height:393px;background:#f0f0f0;"></div>
<div class="a" style="left:584px;top:49px;width:7.6px;height:3.6px;background:#fff;border:0.6px solid #888"></div>
<svg class="a" style="left:585.5px;top:55px" width="5" height="3.5" viewBox="0 0 5 3.5"><path d="M.7 3L2.4 1.2 4.1 3" fill="none" stroke="#444" stroke-width=".8"/></svg>
<svg class="a" style="left:578.3px;top:436px" width="4" height="4.5" viewBox="0 0 4 4.5"><path d="M1 .5l2 1.7L1 4" fill="none" stroke="#444" stroke-width=".8"/></svg>
<div class="a" style="left:584px;top:434.1px;width:8px;height:8px;background:#f0f0f0;"></div>
<svg class="a" style="left:586px;top:436px" width="6" height="6" viewBox="0 0 6 6"><path d="M5 1v4H1" fill="none" stroke="#bbb" stroke-width=".6"/></svg>
<svg class="a" style="left:585.3px;top:429px" width="6" height="4" viewBox="0 0 6 4"><path d="M1 1l1.8 1.8L4.6 1" fill="none" stroke="#444" stroke-width=".8"/></svg>
<div class="a" style="left:584.2px;top:186.4px;width:7.8px;height:104.3px;background:#cdcdcd;"></div>
<div class="a" style="left:592.2px;top:21.5px;width:12px;height:420.5px;background:#fff;"></div>
<div class="a" style="left:594.3px;top:50px;width:9.7px;height:53px;background:#f0f0f0;border:0.7px solid #c8c8c8;border-right:none"></div>
<div class="t" style="left:597px;top:51.50px;font-size:7px;color:#707070;transform:scaleX(0.86);transform:rotate(90deg) scaleX(.86);transform-origin:0 0;left:603.1px;">Layers Toolbar</div>
<div class="a" style="left:0px;top:454px;width:604px;height:10px;background:#f0f0f0;"></div>
<div class="a" style="left:413.2px;top:455px;width:0.7px;height:8px;background:#e2e2e2;"></div>
<div class="a" style="left:452px;top:455px;width:0.7px;height:8px;background:#e2e2e2;"></div>
<div class="a" style="left:485px;top:455px;width:0.7px;height:8px;background:#e2e2e2;"></div>
<div class="a" style="left:532.4px;top:455px;width:0.7px;height:8px;background:#e2e2e2;"></div>
<div class="a" style="left:566px;top:455px;width:0.7px;height:8px;background:#e2e2e2;"></div>
<svg class="a" style="left:418px;top:456px" width="5" height="5" viewBox="0 0 5 5"><path d="M.8 .8v3.2M.8 .8h3.2M.8 .8l3.5 3.5" fill="none" stroke="#222" stroke-width=".8"/></svg>
<div class="t" style="left:424.8px;top:455.40px;font-size:7px;color:#222;transform:scaleX(0.77);">546, 1103</div>
<svg class="a" style="left:455.3px;top:456px" width="6" height="6" viewBox="0 0 6 6"><rect x=".4" y=".4" width="5" height="5" fill="#fff" stroke="#444" stroke-width=".7"/><path d="M1.3 1.3l3 3M1.3 1.3h1.8M1.3 1.3v1.8" fill="none" stroke="#333" stroke-width=".6"/></svg>
<div class="t" style="left:462.6px;top:455.40px;font-size:7px;color:#222;transform:scaleX(0.77);">32, 32</div>
<svg class="a" style="left:498.3px;top:456px" width="4" height="6" viewBox="0 0 4 6"><path d="M.5 .5l3 3-1.3.2.8 1.8-.6.3-.8-1.8-1.1 1z" fill="#111"/></svg>
<div class="t" style="left:505.7px;top:455.40px;font-size:7px;color:#222;transform:scaleX(0.77);">578, 1134</div>
<div class="t" style="left:535.4px;top:455.91px;font-size:6px;color:#666;transform:scaleX(0.8);">ℜ</div>
<div class="t" style="left:541.5px;top:455.40px;font-size:7px;color:#222;transform:scaleX(0.77);">1</div>
<div class="t" style="left:578.6px;top:455.40px;font-size:7px;color:#aaa;transform:scaleX(0.77);">CAF</div>
<div class="t" style="left:590.9px;top:455.40px;font-size:7px;color:#222;transform:scaleX(0.77);">NUM</div>
<svg class="a" style="left:0;top:0" width="604" height="483">
<defs>
<linearGradient id="tb" x1="0" y1="0" x2="1" y2="0">
<stop offset="0" stop-color="#2a3850"/><stop offset=".6" stop-color="#2c3a50"/><stop offset="1" stop-color="#36465c"/>
</linearGradient>
</defs>
<rect x="0" y="464.3" width="604" height="18.7" fill="url(#tb)"/>
<rect x="0" y="464.3" width="22.5" height="18.7" fill="#111a28"/>
<rect x="22.5" y="466" width="98.5" height="17" fill="#4a5872"/>
<rect x="22.5" y="464.3" width="98.5" height="1.9" fill="#6a7684"/>
<rect x="40" y="464.3" width="35" height="2" fill="#86a070"/>
<rect x="60" y="464.3" width="8" height="3" fill="#7a9860"/>
<path d="M6.5 469.3l4.3-.6v4.1h-4.3zM11.3 468.6l5.2-.8v5h-5.2zM6.5 473.3h4.3v4.1l-4.3-.6zM11.3 473.3h5.2v5l-5.2-.7z" fill="#fff"/>
<circle cx="32.8" cy="472.5" r="2.3" fill="none" stroke="#d0d8e4" stroke-width=".8"/>
<path d="M31.2 474.2l-2.6 2.8" stroke="#d0d8e4" stroke-width=".9"/>
<rect x="182.7" y="464.3" width="21.9" height="18.7" fill="#3e4b62"/>
<rect x="206.4" y="464.3" width="21.9" height="18.7" fill="#3e4b62"/>
<rect x="368" y="464.3" width="23.6" height="18.7" fill="#46546c"/>
<rect x="392.8" y="464.3" width="21.2" height="18.7" fill="#505d74"/>
<rect x="392.8" y="464.3" width="21.2" height="0.8" fill="#a8b0c0"/>
<!-- island image -->
<ellipse cx="140" cy="476" rx="17" ry="6.5" fill="#d8b048"/>
<ellipse cx="139" cy="475.5" rx="13.5" ry="4.5" fill="#4ab8d8"/>
<ellipse cx="139" cy="474.5" rx="7" ry="2.4" fill="#e89838"/>
<ellipse cx="150" cy="478.5" rx="5" ry="4" fill="#e87820"/>
<ellipse cx="132" cy="469.5" rx="8" ry="2.5" fill="#78a848"/>
<!-- store -->
<rect x="166" y="470" width="10.5" height="9" fill="#f0f4f8"/>
<path d="M168.5 470v-1.5a2.8 2.8 0 0 1 5.5 0V470" fill="none" stroke="#f0f4f8" stroke-width=".9"/>
<rect x="168.7" y="472" width="2.3" height="2.3" fill="#f25022"/><rect x="171.5" y="472" width="2.3" height="2.3" fill="#7fba00"/>
<rect x="168.7" y="474.8" width="2.3" height="2.3" fill="#00a4ef"/><rect x="171.5" y="474.8" width="2.3" height="2.3" fill="#ffb900"/>
<!-- explorer -->
<path d="M189 470h4l1 1.2h6v7.3h-11z" fill="#f0c030"/>
<rect x="189" y="473" width="11" height="5.5" fill="#f8d860"/>
<rect x="192.5" y="475" width="4" height="3.5" fill="#2a8ad8"/>
<!-- yandex -->
<circle cx="217.3" cy="474" r="5.7" fill="#fff"/>
<path d="M214.8 470.5l2.5 3.6 2.5-3.6M217.3 474.1v4.2" fill="none" stroke="#e02020" stroke-width="1.3"/>
<!-- edge -->
<circle cx="240.3" cy="474" r="5.6" fill="#1a8ad8"/>
<path d="M235 475c0-4 5-6.5 9-4 1.5 1 2 2.5 1.3 3.5-1 1-3 1-4.5 0 1 2 3.5 2.5 4.5 2" fill="#40c870"/>
<circle cx="241.5" cy="474" r="2" fill="#1470b8"/>
<!-- paint icon -->
<rect x="258.3" y="469" width="9.5" height="10" fill="#e8ecf0"/>
<path d="M259 476l8-5" stroke="#2a5ab8" stroke-width="2"/>
<path d="M261 478l6-3" stroke="#c02030" stroke-width="1"/>
<!-- green icon -->
<path d="M282 474l2-4.5 3.5-1.5 3.5 1.5 2 4.5-2 4.5-3.5 1.5-3.5-1.5z" fill="#1e8a32"/>
<path d="M284.5 472l3-2.5 3 2.5-1 4h-4z" fill="#3ab050"/>
<circle cx="287.5" cy="475" r="1.4" fill="#d8f0d8"/>
<!-- PW icon -->
<circle cx="310.5" cy="474" r="5.7" fill="#e8f4f8"/>
<path d="M306 479v-9h3c2 0 2 3.5 0 3.5h-3M309.5 470.5l1.5 8 1.5-6 1.5 6 1.5-8" fill="none" stroke="#3a8a3a" stroke-width="1.1"/>
<!-- red swoosh -->
<path d="M328 478.5c4-1.5 6-4 7-6.5.6-1.5-.5-2.5-2.5-2.3" fill="none" stroke="#d03020" stroke-width="1.4"/>
<!-- obs -->
<circle cx="356.2" cy="474" r="5.6" fill="#1a1a1a" stroke="#c8c8c8" stroke-width=".8"/>
<circle cx="356.2" cy="474" r="2.8" fill="none" stroke="#d0d0d0" stroke-width="1"/>
<!-- shield blue -->
<path d="M376.5 469l5.3-1.5 5.3 1.5v4.5c0 3-2.5 5-5.3 6-2.8-1-5.3-3-5.3-6z" fill="#2a90e0"/>
<circle cx="381.8" cy="474.2" r="2.2" fill="none" stroke="#fff" stroke-width=".9"/>
<!-- clickteam -->
<circle cx="402.5" cy="474" r="6.5" fill="#7a38c8"/>
<circle cx="402.5" cy="474" r="3.4" fill="none" stroke="#e8c0ff" stroke-width="1"/>
<circle cx="402.5" cy="474" r="1.2" fill="#c82060"/>
<!-- tray -->
<rect x="499.5" y="469" width="5.5" height="8.5" rx="1" fill="#2a9ae0"/>
<circle cx="502.2" cy="473" r="1.4" fill="#fff"/>
<circle cx="504.3" cy="477" r="1.2" fill="#30c060"/>
<path d="M510 473.5l5.5-4v8z" fill="#f05020"/>
<rect x="521" y="469.5" width="9.5" height="7.5" fill="#3a7a2a"/>
<path d="M522 473.5c2-3 5-3 7.5 0-2.5 3-5.5 3-7.5 0z" fill="#76b900"/>
<rect x="533" y="469.5" width="8" height="6" fill="none" stroke="#d0d8e0" stroke-width=".8"/>
<path d="M532.5 477.5h4" stroke="#d0d8e0" stroke-width=".8"/>
<path d="M544 472h1.8l2.3-2.3v8.6l-2.3-2.3H544z" fill="none" stroke="#d0d8e0" stroke-width=".8"/>
<path d="M549.5 471.5c1 1.5 1 3.5 0 5M551.2 470.5c1.5 2 1.5 5 0 7" fill="none" stroke="#d0d8e0" stroke-width=".7"/>
</svg>
<div class="t" style="left:41.5px;top:469.89px;font-size:8px;color:#bcc4d0;transform:scaleX(0.92);">Поиск</div>
<div class="t" style="left:557px;top:470.36px;font-size:6.5px;color:#e0e6ee;transform:scaleX(0.85);">РУС</div>
<div class="t" style="left:579.6px;top:466.41px;font-size:6px;color:#e0e6ee;transform:scaleX(0.85);">15:15</div>
<div class="t" style="left:573px;top:473.36px;font-size:6.5px;color:#e0e6ee;transform:scaleX(0.82);">27.11.2024</div>
</body></html>
